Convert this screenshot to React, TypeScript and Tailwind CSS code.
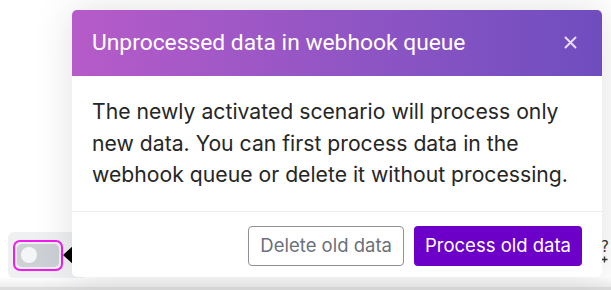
import React from "react";

export default function App() {
  return (
    <div className="relative w-[611px] h-[290px] overflow-hidden bg-white" style={{ fontFamily: "Inter, 'Noto Sans', sans-serif" }}>
      {/* bottom strip */}
      <div className="absolute left-0 right-0 bottom-0 h-[3px] bg-[#dcdcdc]" />
      <div className="absolute left-0 right-0 bottom-[3px] h-[10px] bg-linear-to-b from-white to-[#ececec]" />
      {/* underlying toggle panel */}
      <div className="absolute left-[8px] top-[232px] w-[80px] h-[46px] rounded-[6px] bg-[#eff0f2] flex items-center pl-[5px]">
        <div className="w-[50px] h-[31px] rounded-[7px] border-2 border-[#f21bf0] p-[2px] flex">
          <div className="flex-1 rounded-[5px] bg-[#cdd1d6] flex items-center pl-[4px]">
            <div className="w-[16px] h-[16px] rounded-full bg-[#f4f5f6]" />
          </div>
        </div>
        <div className="w-0 h-0 border-y-[11px] border-y-transparent border-r-[12px] border-r-black" />
      </div>
      {/* help icon behind */}
      <div className="absolute left-[601px] top-[240px] flex flex-col items-center text-[#333] leading-none">
        <span className="text-[15px]" style={{ fontFamily: "'DejaVu Sans', sans-serif" }}>?</span>
        <svg width="7" height="7" viewBox="0 0 7 7" className="mt-[1px]">
          <path d="M3.5 0.5 V6.5 M0.5 3.5 H6.5" stroke="#333" strokeWidth="1.4" />
        </svg>
      </div>

      {/* popover */}
      <div className="absolute left-[72px] top-[10px] w-[530px] h-[267px] rounded-[5px] bg-white shadow-[0_0_40px_rgba(0,0,0,0.12)] flex flex-col overflow-hidden">
        <div className="h-[66px] shrink-0 bg-linear-to-r from-[#b65bc9] to-[#6f4dbf] flex items-center justify-between pl-[20px] pr-[25px]">
          <span className="text-white text-[22.8px]" style={{ fontFamily: "Roboto, sans-serif" }}>Unprocessed data in webhook queue</span>
          <svg width="13" height="13" viewBox="0 0 13 13" className="mt-[-2px]">
            <path d="M1.5 1.5 L11.5 11.5 M11.5 1.5 L1.5 11.5" stroke="#e8dcf5" strokeWidth="2" strokeLinecap="round" />
          </svg>
        </div>
        <div className="h-[135px] shrink-0 pl-[20px] pr-[20px] pt-[20px] text-[21.2px] leading-[31.5px] text-[#262626]">
          The newly activated scenario will process only new data. You can first process data in the webhook queue or delete it without processing.
        </div>
        <div className="border-t border-[#ececec] flex-1 flex items-center justify-end gap-[10px] pr-[20px] pt-[2px]">
          <button className="h-[40px] px-[11px] rounded-[4px] border border-[#8d9199] text-[#6b7079] text-[18.5px] bg-white">Delete old data</button>
          <button className="h-[40px] px-[11px] rounded-[4px] bg-[#6c00c9] text-white text-[18.5px]">Process old data</button>
        </div>
      </div>
    </div>
  );
}
